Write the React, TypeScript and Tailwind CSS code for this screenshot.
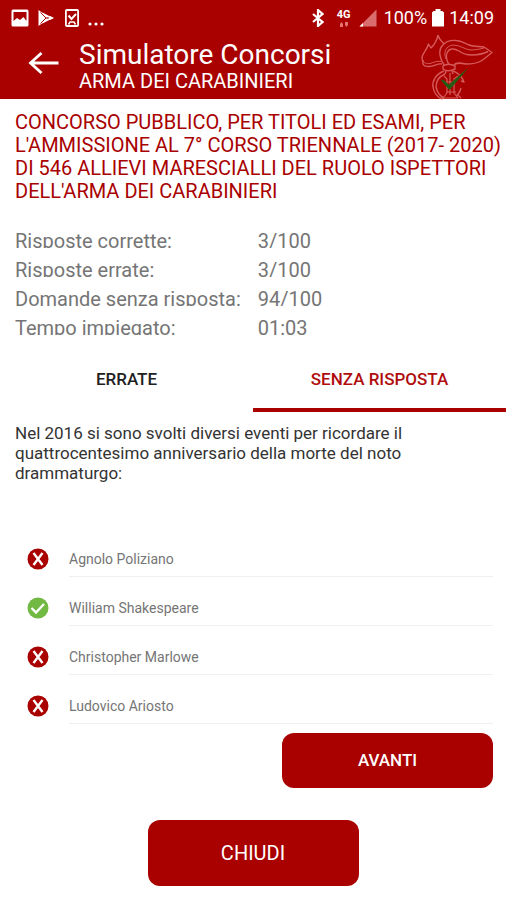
import { useState } from "react";

type Answer = { text: string; correct: boolean };

const stats = [
  { label: "Risposte corrette:", value: "3/100" },
  { label: "Risposte errate:", value: "3/100" },
  { label: "Domande senza risposta:", value: "94/100" },
  { label: "Tempo impiegato:", value: "01:03" },
];

const answers: Answer[] = [
  { text: "Agnolo Poliziano", correct: false },
  { text: "William Shakespeare", correct: true },
  { text: "Christopher Marlowe", correct: false },
  { text: "Ludovico Ariosto", correct: false },
];

const tabs = ["ERRATE", "SENZA RISPOSTA"];

function StatusBar() {
  return (
    <div className="flex h-9 items-center justify-between pr-3 pl-[11px] text-lg leading-9">
      <div className="flex items-center gap-[9px]">
        <svg width="18" height="18" viewBox="0 0 18 18">
          <path
            fillRule="evenodd"
            d="M2 0.500h14q1.500 0 1.500 1.500v14q0 1.500-1.500 1.500H2q-1.500 0-1.500-1.500V2Q0.500 0.500 2 0.500zM2.500 3v9l3.500-3 3 2 3.500-3 3 4V3z"
            fill="#fff"
          />
        </svg>
        <svg width="16" height="18" viewBox="0 0 16 18">
          <path d="M0.500 1v16l5.500-4L10 9 6 5z" fill="#fff" />
          <path d="M4 4.500l9 4.500-9 4.500" fill="none" stroke="#fff" strokeWidth="2" />
          <path d="M2.500 3.500L8 9l-5.500 5.500M8 9h6" fill="none" stroke="#a90000" strokeWidth="1" />
          <path d="M12 7l4 2-4 2-1.500-2z" fill="#fff" />
        </svg>
        <svg className="ml-[2px]" width="14" height="18" viewBox="0 0 14 18" fill="none" stroke="#fff">
          <rect x="0.900" y="1" width="12.200" height="16" rx="1" strokeWidth="1.800" />
          <path d="M3.500 6.500l3 3.500L11 5" strokeWidth="2" />
          <path d="M3.500 15.500l1.500-2.500h4l1.500 2.500" strokeWidth="1.500" />
        </svg>
        <svg width="16" height="18" viewBox="0 0 16 18" fill="#fff">
          <circle cx="2" cy="15" r="1.600" />
          <circle cx="8" cy="15" r="1.600" />
          <circle cx="14" cy="15" r="1.600" />
        </svg>
      </div>
      <div className="flex items-center">
        <svg className="mr-3" width="12" height="18" viewBox="0 0 12 18" fill="none" stroke="#fff" strokeWidth="2.200">
          <path d="M1 5l9.500 8L6 17V1l4.500 4L1 13" />
        </svg>
        <div className="mr-[7px] flex w-4 flex-col items-center gap-[2px]">
          <span className="text-[11px] leading-[10px] font-bold">4G</span>
          <svg width="10" height="5" viewBox="0 0 10 5" fill="#e57373">
            <path d="M1 2l1.500-2L4 2v3H1zM6 0h3v3L7.500 5 6 3z" />
          </svg>
        </div>
        <svg className="mr-[7px]" width="18" height="18" viewBox="0 0 18 18">
          <path d="M17.500 0.500v17H0.500z" fill="#d96c6c" />
          <path d="M4 14v3.500H0.500z" fill="#fff" />
        </svg>
        <span>100%</span>
        <svg className="mx-[5px]" width="12" height="18" viewBox="0 0 12 18" fill="#fff">
          <path d="M3.500 0h5v2H10.500l1.500 1.500V17.500H0V3.500L1.500 2h2z" />
        </svg>
        <span>14:09</span>
      </div>
    </div>
  );
}

function FlameLogo() {
  return (
    <svg
      className="mr-[13px] shrink-0"
      width="74"
      height="66"
      viewBox="0 0 74 66"
      fill="none"
      stroke="#d65a5a"
      strokeWidth="1.400"
      strokeLinejoin="round"
    >
      {/* flame */}
      <path d="M23 29c-5-1-8 3-13 2.500-3 0-6-1-6-3 0-2-1-4-1-6 0-4 5-7 6.500-13.500l2.500 4c3-3 6-8 7-13 1 5 4 6 6 9" />
      <path d="M4 25c0 3 4 4 7 3.500 4-1 7-3 11-2" strokeWidth="1" />
      {/* ribbon */}
      <path d="M25 30c-4-6-6-14-2-19 3-4 8-6 14-5.500 5 0 9 3 13 4.500 5 2 10 1 15 2l8 5.500c-4 3-7 6-11 8.500-5 3-10 3-15 3-5-1-10-2-12 1" />
      <path d="M30 30c-2-4-4-8-2-12 2-5 7-5 12-2 4 3 8 4 13 4 6 0 11-1 16-3.500" />
      <path d="M27 24c-3-7 0-13 7-14 7 0 11 4 17 5 6 0 10-1 14-2" strokeWidth="1" />
      {/* knot and grenade */}
      <path d="M24 31c3-2 8-2 12 0v3c-4 2-9 2-12 0zM27 36l-1 3M33 36l1 3" />
      <path d="M25 36c-8 3-12 10-11 16 1 6 4 10 9 12M26 39c-7 3-9 8-9 13 1 5 4 9 8 11M34 36c6 2 9 6 11 11l-3-1M42 53c-1 4-2 6-5 8" />
      <path d="M25 41l3 3v14l-4 5h15l-4-5V44l4-3M27 47h10M27 57h10M31 38v22M25 62l-2 2M39 60l3 3" strokeWidth="1.200" />
      <path d="M22 45.500l2-1 6 5L46.500 35l2-1L30.500 55z" fill="#245c14" stroke="none" />
    </svg>
  );
}

function AnswerIcon({ correct }: { correct: boolean }) {
  return (
    <svg
      className="shrink-0"
      width="22"
      height="22"
      viewBox="0 0 22 22"
      fill="none"
      role="img"
      aria-label={correct ? "Corretta" : "Errata"}
    >
      <circle cx="11" cy="11" r="10.500" fill={correct ? "#72b944" : "#a90000"} />
      {correct ? (
        <path d="M4.500 11l4.500 4.500 8-8.500" stroke="#fff" strokeWidth="2.400" />
      ) : (
        <path d="M6.500 5l9 12M15.500 5l-9 12" stroke="#fff" strokeWidth="2.400" />
      )}
    </svg>
  );
}

export default function App() {
  const [active, setActive] = useState(1);

  return (
    <div className="min-h-screen bg-white pb-3 font-[Roboto,sans-serif]">
      <header className="bg-[#a90000] text-white">
        <StatusBar />
        <div className="flex h-[63px] items-center">
          <button type="button" aria-label="Indietro" className="mr-5 ml-7 shrink-0 pb-2.5">
            <svg width="31" height="22" viewBox="0 0 31 22" fill="none" stroke="#fff" strokeWidth="2.800">
              <path d="M13.500 1L2.500 11l11 10M2.500 11H30.500" />
            </svg>
          </button>
          <div className="flex-1 pb-1.5">
            <h1 className="text-[28px] leading-8">Simulatore Concorsi</h1>
            <p className="text-xl leading-5">ARMA DEI CARABINIERI</p>
          </div>
          <FlameLogo />
        </div>
      </header>

      <main>
        <h2 className="pt-3 pl-[15px] text-xl leading-[23px] text-[#a90000]">
          CONCORSO PUBBLICO, PER TITOLI ED ESAMI, PER L'AMMISSIONE AL 7° CORSO TRIENNALE (2017- 2020) DI 546 ALLIEVI
          MARESCIALLI DEL RUOLO ISPETTORI DELL'ARMA DEI CARABINIERI
        </h2>

        <dl className="mt-6 flex flex-col gap-2 px-[15px] text-xl text-[#757575]">
          {stats.map((s) => (
            <div key={s.label} className="flex h-[21px] overflow-hidden leading-7">
              <dt className="w-[51%]">{s.label}</dt>
              <dd>{s.value}</dd>
            </div>
          ))}
        </dl>

        <div role="tablist" className="mt-3 flex">
          {tabs.map((t, i) => (
            <button
              key={t}
              type="button"
              role="tab"
              aria-selected={i === active}
              onClick={() => setActive(i)}
              className={
                i === active
                  ? "h-[65px] flex-1 border-b-4 border-[#a90000] pt-1 text-[17px] font-medium text-[#b00d0d]"
                  : "h-[65px] flex-1 border-b-4 border-transparent pt-1 text-[17px] font-medium text-[#212121]"
              }
            >
              {t}
            </button>
          ))}
        </div>

        <section className="px-[13px] pt-[11px]">
          <p className="min-h-[105px] pr-16 pl-[2px] text-[17px] leading-5 text-[#333]">
            Nel 2016 si sono svolti diversi eventi per ricordare il quattrocentesimo anniversario della morte del noto
            drammaturgo:
          </p>
          <ul className="pl-[14px]">
            {answers.map((a) => (
              <li key={a.text} className="flex h-[49px] gap-5">
                <span className="flex items-center pt-3">
                  <AnswerIcon correct={a.correct} />
                </span>
                <span className="flex flex-1 items-center border-b border-[#f0f0f0] pt-3.5 text-sm text-[#757575]">
                  {a.text}
                </span>
              </li>
            ))}
          </ul>
        </section>

        <div className="flex justify-end px-[13px] pt-[9px]">
          <button type="button" className="h-[55px] w-[211px] rounded-xl bg-[#a90000] text-[17px] font-medium text-white">
            AVANTI
          </button>
        </div>
        <div className="flex justify-center pt-8">
          <button type="button" className="h-[66px] w-[211px] rounded-xl bg-[#a90000] text-xl text-white">
            CHIUDI
          </button>
        </div>
      </main>
    </div>
  );
}
